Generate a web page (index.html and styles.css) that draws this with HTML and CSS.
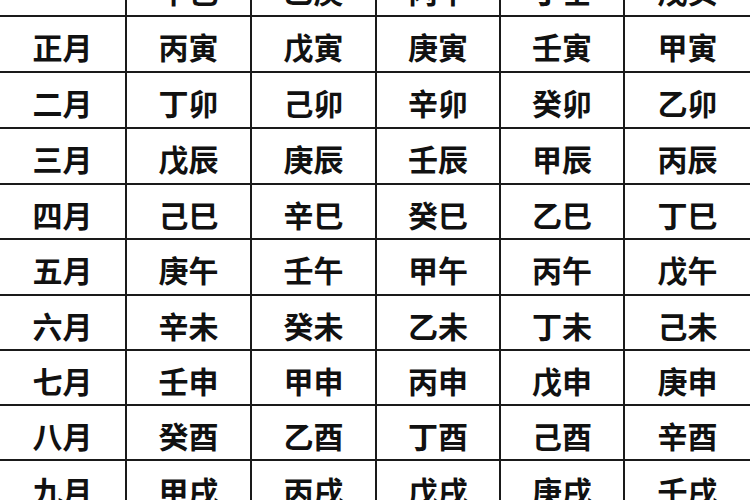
FILE: index.html
```html
<!DOCTYPE html>
<html lang="zh-CN">
<head>
<meta charset="utf-8">
<title>五虎遁月表</title>
<link rel="stylesheet" href="styles.css">
</head>
<body>
<div class="table">
  <div class="cell"></div><div class="cell">甲己</div><div class="cell">乙庚</div><div class="cell">丙辛</div><div class="cell">丁壬</div><div class="cell">戊癸</div>
  <div class="cell">正月</div><div class="cell">丙寅</div><div class="cell">戊寅</div><div class="cell">庚寅</div><div class="cell">壬寅</div><div class="cell">甲寅</div>
  <div class="cell">二月</div><div class="cell">丁卯</div><div class="cell">己卯</div><div class="cell">辛卯</div><div class="cell">癸卯</div><div class="cell">乙卯</div>
  <div class="cell">三月</div><div class="cell">戊辰</div><div class="cell">庚辰</div><div class="cell">壬辰</div><div class="cell">甲辰</div><div class="cell">丙辰</div>
  <div class="cell">四月</div><div class="cell">己巳</div><div class="cell">辛巳</div><div class="cell">癸巳</div><div class="cell">乙巳</div><div class="cell">丁巳</div>
  <div class="cell">五月</div><div class="cell">庚午</div><div class="cell">壬午</div><div class="cell">甲午</div><div class="cell">丙午</div><div class="cell">戊午</div>
  <div class="cell">六月</div><div class="cell">辛未</div><div class="cell">癸未</div><div class="cell">乙未</div><div class="cell">丁未</div><div class="cell">己未</div>
  <div class="cell">七月</div><div class="cell">壬申</div><div class="cell">甲申</div><div class="cell">丙申</div><div class="cell">戊申</div><div class="cell">庚申</div>
  <div class="cell">八月</div><div class="cell">癸酉</div><div class="cell">乙酉</div><div class="cell">丁酉</div><div class="cell">己酉</div><div class="cell">辛酉</div>
  <div class="cell">九月</div><div class="cell">甲戌</div><div class="cell">丙戌</div><div class="cell">戊戌</div><div class="cell">庚戌</div><div class="cell">壬戌</div>
</div>
</body>
</html>
```

FILE: styles.css
```css
html, body {
  margin: 0;
  padding: 0;
  background: #ffffff;
  overflow: hidden;
}

.table {
  display: grid;
  width: 750px;
  margin-top: -39px;
  grid-template-columns: 127px 125px 125px 124px 124px 125px;
  grid-template-rows: 56px 56px 56px 56px 55px 56px 55px 55px 55px 56px;
  font-family: "Noto Sans CJK SC", sans-serif;
  font-weight: 700;
  font-size: 30px;
  color: #111111;
}

.cell {
  display: flex;
  align-items: center;
  justify-content: center;
  padding-top: 4px;
  box-sizing: border-box;
  border-right: 2px solid #1a1a1a;
  border-bottom: 2px solid #1a1a1a;
  line-height: 1;
  letter-spacing: 0;
}

.cell:nth-child(6n) {
  border-right: none;
}
```
